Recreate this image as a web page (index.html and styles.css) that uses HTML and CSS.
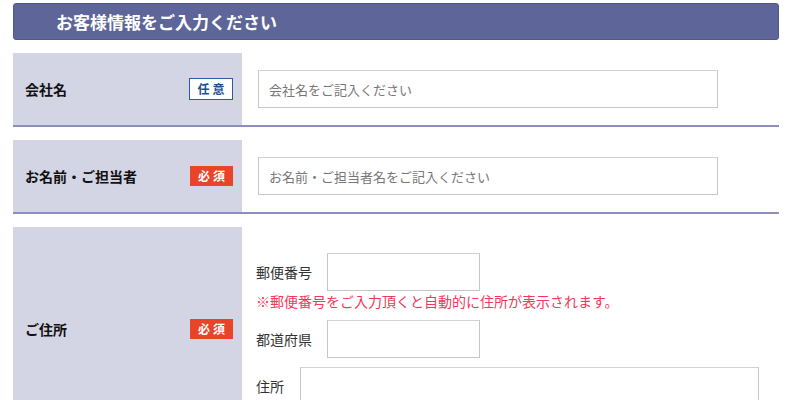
FILE: index.html
```html
<!DOCTYPE html>
<html lang="ja">
<head>
    <meta charset="UTF-8">
    <meta name="viewport" content="width=device-width, initial-scale=1.0">
    <title>お客様情報</title>
    <link rel="stylesheet" href="styles.css">
</head>
<body>
  <div class="form-wrap">
    <h2 class="form-title">お客様情報をご入力ください</h2>

    <div class="form-row">
      <div class="label-cell">
        <span class="label-text">会社名</span>
        <span class="badge optional">任意</span>
      </div>
      <div class="field-cell">
        <input type="text" class="text-input wide" placeholder="会社名をご記入ください">
      </div>
    </div>

    <div class="form-row">
      <div class="label-cell">
        <span class="label-text">お名前・ご担当者</span>
        <span class="badge required">必須</span>
      </div>
      <div class="field-cell">
        <input type="text" class="text-input wide" placeholder="お名前・ご担当者名をご記入ください">
      </div>
    </div>

    <div class="form-row">
      <div class="label-cell">
        <span class="label-text">ご住所</span>
        <span class="badge required">必須</span>
      </div>
      <div class="field-cell address">
        <div class="sub-line">
          <span class="sub-label">郵便番号</span>
          <input type="text" class="text-input short">
        </div>
        <p class="note">※郵便番号をご入力頂くと自動的に住所が表示されます。</p>
        <div class="sub-line pref">
          <span class="sub-label">都道府県</span>
          <input type="text" class="text-input short">
        </div>
        <div class="sub-line addr">
          <span class="sub-label">住所</span>
          <input type="text" class="text-input long">
        </div>
      </div>
    </div>
  </div>
</body>
</html>
```

FILE: styles.css
```css
*{
    box-sizing:border-box;
}
body{
    margin:0;
    background-color:#fff;
    font-family:"Noto Sans CJK JP", "Noto Sans", sans-serif;
    color:#222;
}
.form-wrap{
    padding:3px 21px 0 13px;
}
.form-title{
    margin:0;
    height:37px;
    display:flex;
    align-items:center;
    padding-left:42px;
    background-color:#5e6699;
    border:1px solid #4f578c;
    border-radius:3px;
    color:#fff;
    font-size:17px;
    font-weight:bold;
    line-height:1;
}
.form-row{
    display:flex;
    margin-top:13px;
    border-bottom:2px solid #8b90bb;
}
.label-cell{
    width:229px;
    flex-shrink:0;
    display:flex;
    align-items:center;
    justify-content:space-between;
    padding:0 9px 0 12px;
    background-color:#d4d5e4;
    min-height:72px;
}
.label-text{
    font-size:14px;
    font-weight:bold;
    color:#111;
    line-height:1;
}
.badge{
    display:flex;
    align-items:center;
    justify-content:center;
    font-size:12px;
    font-weight:bold;
    letter-spacing:3px;
    text-indent:3px;
    line-height:1;
}
.badge.optional{
    width:44px;
    height:22px;
    background-color:#fff;
    border:1px solid #2b5b9b;
    color:#1e4f91;
}
.badge.required{
    width:43px;
    height:20px;
    background-color:#e8442a;
    color:#fff;
}
.field-cell{
    flex:1;
    display:flex;
    align-items:center;
    padding-left:16px;
}
.text-input{
    height:38px;
    border:1px solid #c6c6c6;
    border-top-color:#d2d2d2;
    background:#fff;
    padding:0 10px;
    font-family:inherit;
    font-size:13px;
    outline:none;
}
.text-input::placeholder{
    color:#777;
}
.text-input.wide{
    width:460px;
}
.text-input.short{
    width:153px;
}
.text-input.long{
    width:459px;
}
.field-cell.address{
    flex-direction:column;
    align-items:flex-start;
    padding:26px 0 26px 14px;
}
.sub-line{
    display:flex;
    align-items:center;
}
.sub-label{
    font-size:14px;
    color:#333;
    line-height:1;
    width:71px;
}
.sub-line.addr .sub-label{
    width:44px;
}
.sub-line.pref{
    margin-top:11px;
}
.sub-line.addr{
    margin-top:9px;
}
.note{
    margin:2px 0 0;
    font-size:14px;
    line-height:16px;
    color:#f2385a;
}
```
